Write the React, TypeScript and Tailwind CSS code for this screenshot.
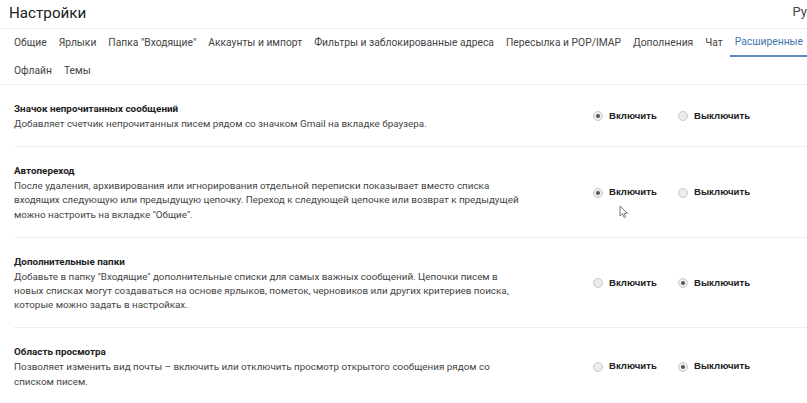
import React from "react";

const tabs = [
  "Общие",
  "Ярлыки",
  'Папка "Входящие"',
  "Аккаунты и импорт",
  "Фильтры и заблокированные адреса",
  "Пересылка и POP/IMAP",
  "Дополнения",
  "Чат",
  "Расширенные",
];

const sections = [
  {
    title: "Значок непрочитанных сообщений",
    lines: ["Добавляет счетчик непрочитанных писем рядом со значком Gmail на вкладке браузера."],
    on: true,
  },
  {
    title: "Автопереход",
    lines: [
      "После удаления, архивирования или игнорирования отдельной переписки показывает вместо списка",
      "входящих следующую или предыдущую цепочку. Переход к следующей цепочке или возврат к предыдущей",
      'можно настроить на вкладке "Общие".',
    ],
    on: true,
  },
  {
    title: "Дополнительные папки",
    lines: [
      'Добавьте в папку "Входящие" дополнительные списки для самых важных сообщений. Цепочки писем в',
      "новых списках могут создаваться на основе ярлыков, пометок, черновиков или других критериев поиска,",
      "которые можно задать в настройках.",
    ],
    on: false,
  },
  {
    title: "Область просмотра",
    lines: [
      "Позволяет изменить вид почты – включить или отключить просмотр открытого сообщения рядом со",
      "списком писем.",
    ],
    on: false,
  },
];

function Radio({ checked, label }: { checked: boolean; label: string }) {
  return (
    <div className="flex items-center gap-[6px]">
      <span className="w-[10px] h-[10px] rounded-full border border-[#c9c9c9] bg-[#ececec] flex items-center justify-center">
        {checked && <span className="w-[4px] h-[4px] rounded-full bg-[#555]" />}
      </span>
      <span className="font-['Liberation_Sans',Arial,sans-serif] font-bold text-[9.6px] text-[#222]">{label}</span>
    </div>
  );
}

export default function App() {
  return (
    <div className="relative w-[807px] h-[403px] overflow-hidden bg-white font-['Roboto',sans-serif]">
      {/* header */}
      <div className="h-[29px] flex items-start justify-between border-b border-[#ededed]">
        <div className="pl-[9px] pt-[2px] text-[15.2px] leading-[22px] text-[#202124]">Настройки</div>
        <div className="pt-[3px] text-[13px] leading-[18px] text-[#444]">Ру</div>
      </div>

      {/* tabs */}
      <div className="border-b border-[#ededed] pl-[14px]">
        <div className="flex gap-[12px] h-[28px]">
          {tabs.map((t) => {
            const active = t === "Расширенные";
            return (
              <div
                key={t}
                className={`flex items-center text-[10.3px] whitespace-nowrap ${
                  active
                    ? "text-[#3f74ad] border-b-2 border-[#5f88b4] -mx-[5px] px-[5px]"
                    : "text-[#444]"
                }`}
              >
                {t}
              </div>
            );
          })}
        </div>
        <div className="flex gap-[12px] h-[27px] items-center text-[10.3px] text-[#444]">
          <span>Офлайн</span>
          <span>Темы</span>
        </div>
      </div>

      {/* sections */}
      <div className="ml-[14px]">
        {sections.map((s) => (
          <div key={s.title} className="flex items-center border-b border-[#ededed] pt-[16px] pb-[15px]">
            <div className="w-[579px]">
              <div className="text-[9.85px] leading-[16px] font-bold text-[#222]">{s.title}</div>
              {s.lines.map((l) => (
                <div key={l} className="text-[9.85px] leading-[14.2px] text-[#444] whitespace-nowrap">
                  {l}
                </div>
              ))}
            </div>
            <div className="flex items-center">
              <div className="w-[85px]">
                <Radio checked={s.on} label="Включить" />
              </div>
              <Radio checked={!s.on} label="Выключить" />
            </div>
          </div>
        ))}
      </div>

      {/* mouse cursor */}
      <svg className="absolute left-[619px] top-[205px]" width="10" height="14" viewBox="0 0 10 14">
        <path d="M1 1 L1 11 L3.5 8.8 L5.3 12.6 L6.8 11.9 L5.1 8.3 L8.3 8.3 Z" fill="#fff" stroke="#777" strokeWidth="1" />
      </svg>
    </div>
  );
}
